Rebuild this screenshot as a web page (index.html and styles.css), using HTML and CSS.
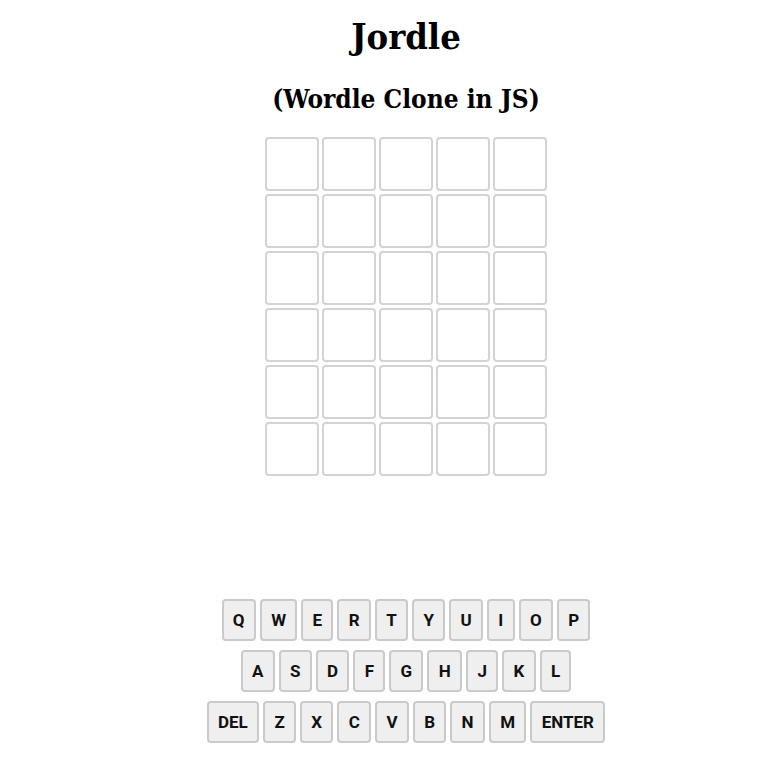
FILE: index.html
```html
<!DOCTYPE html>
<html>
<head>
<meta charset="utf-8">
<link rel="stylesheet" href="styles.css">
</head>
<body>
<main class="app">
  <h1 class="title">Jordle</h1>
  <h2 class="subtitle">(Wordle Clone in JS)</h2>
  <div class="board">
    <div class="tile"></div><div class="tile"></div><div class="tile"></div><div class="tile"></div><div class="tile"></div>
    <div class="tile"></div><div class="tile"></div><div class="tile"></div><div class="tile"></div><div class="tile"></div>
    <div class="tile"></div><div class="tile"></div><div class="tile"></div><div class="tile"></div><div class="tile"></div>
    <div class="tile"></div><div class="tile"></div><div class="tile"></div><div class="tile"></div><div class="tile"></div>
    <div class="tile"></div><div class="tile"></div><div class="tile"></div><div class="tile"></div><div class="tile"></div>
    <div class="tile"></div><div class="tile"></div><div class="tile"></div><div class="tile"></div><div class="tile"></div>
  </div>
  <div class="keyboard">
    <div class="key-row">
      <button class="key">Q</button><button class="key">W</button><button class="key">E</button><button class="key">R</button><button class="key">T</button><button class="key">Y</button><button class="key">U</button><button class="key">I</button><button class="key">O</button><button class="key">P</button>
    </div>
    <div class="key-row">
      <button class="key">A</button><button class="key">S</button><button class="key">D</button><button class="key">F</button><button class="key">G</button><button class="key">H</button><button class="key">J</button><button class="key">K</button><button class="key">L</button>
    </div>
    <div class="key-row">
      <button class="key">DEL</button><button class="key">Z</button><button class="key">X</button><button class="key">C</button><button class="key">V</button><button class="key">B</button><button class="key">N</button><button class="key">M</button><button class="key">ENTER</button>
    </div>
  </div>
</main>
</body>
</html>
```
FILE: styles.css
```css
body {
  margin: 8px;
  background: #ffffff;
  font-family: "DejaVu Serif Condensed", "DejaVu Serif", serif;
}

.app {
  display: flex;
  flex-direction: column;
  align-items: center;
  padding-left: 32px;
}

.title {
  font-size: 36px;
  font-weight: bold;
  line-height: 1.15;
  margin: 8px 0 0;
}

.subtitle {
  font-size: 26px;
  font-weight: bold;
  line-height: 1.15;
  margin: 28px 0 0;
}

.board {
  display: grid;
  grid-template-columns: repeat(5, 54px);
  grid-auto-rows: 54px;
  gap: 3px;
  margin-top: 22px;
}

.tile {
  border: 2px solid #d3d3d3;
  border-radius: 4px;
  box-sizing: border-box;
}

.keyboard {
  display: flex;
  flex-direction: column;
  align-items: center;
  gap: 9px;
  margin-top: 123px;
}

.key-row {
  display: flex;
  gap: 4px;
}

.key {
  font-family: Roboto, "Noto Sans", sans-serif;
  font-weight: bold;
  font-size: 17px;
  color: #111;
  background: #efefef;
  border: 2px solid #cacaca;
  border-radius: 4px;
  height: 42px;
  padding: 0 9.3px;
  margin: 0;
}
```
